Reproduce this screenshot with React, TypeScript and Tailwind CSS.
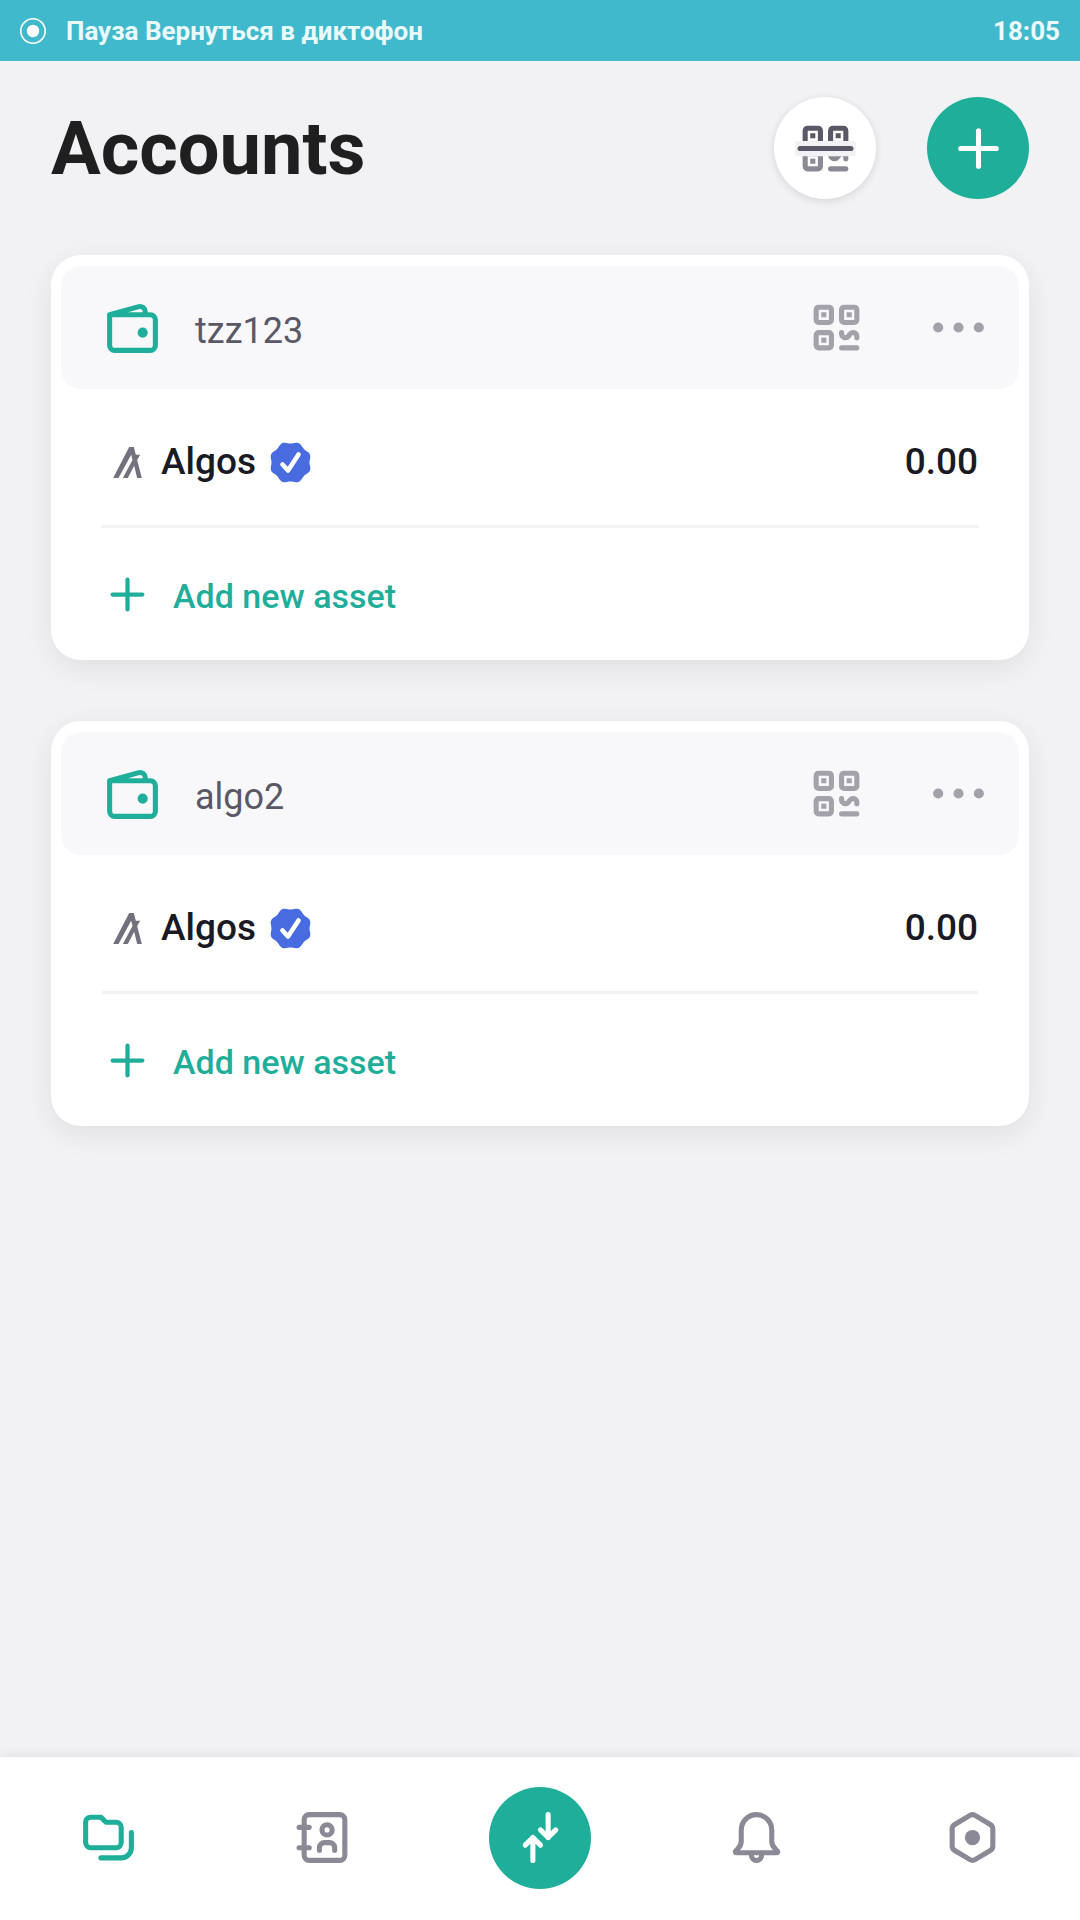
import type { ReactNode } from 'react';

const accounts = [
  { name: 'tzz123', asset: 'Algos', balance: '0.00' },
  { name: 'algo2', asset: 'Algos', balance: '0.00' },
];

function Icon({ children, className = 'size-[61px]' }: { children: ReactNode; className?: string }) {
  return (
    <svg
      viewBox="0 0 24 24"
      fill="none"
      stroke="currentColor"
      strokeWidth={2}
      strokeLinecap="round"
      strokeLinejoin="round"
      className={`shrink-0 ${className}`}
      aria-hidden="true"
    >
      {children}
    </svg>
  );
}

function QrTop() {
  return (
    <>
      <rect x="4" y="4" width="6" height="6" rx="1" />
      <rect x="14" y="4" width="6" height="6" rx="1" />
      <path d="M6 6h2v2H6zM16 6h2v2h-2z" fill="currentColor" stroke="none" />
    </>
  );
}

function QrBottom() {
  return (
    <>
      <rect x="4" y="14" width="6" height="6" rx="1" />
      <path d="M6 16h2v2H6z" fill="currentColor" stroke="none" />
      <path d="M14 14v.5a1.5 1.5 0 0 0 2.7.9l.6-.8a1.5 1.5 0 0 1 2.7.9v.5M14 20h6" />
    </>
  );
}

function QrIcon() {
  return (
    <Icon>
      <QrTop />
      <QrBottom />
    </Icon>
  );
}

function ScanIcon() {
  return (
    <Icon>
      <g className="text-[#5a5866]">
        <QrTop />
      </g>
      <g className="text-[#8b8995]">
        <QrBottom />
      </g>
      <rect x="0" y="9" width="24" height="6" rx="1" fill="#f2f2f4" stroke="none" />
      <path d="M2 12h20" stroke="#5a5866" />
    </Icon>
  );
}

function WalletIcon() {
  return (
    <Icon className="size-[61px] text-[#1fae9a]">
      <path d="M3 7h16a2 2 0 0 1 2 2v10a2 2 0 0 1-2 2H5a2 2 0 0 1-2-2zL14.5 3.8A2 2 0 0 1 17 5.7V7" />
      <circle cx="16" cy="14" r="2" fill="currentColor" stroke="none" />
    </Icon>
  );
}

function PlusIcon({ className }: { className?: string }) {
  return (
    <Icon className={className}>
      <path d="M12 5v14M5 12h14" />
    </Icon>
  );
}

function AlgoLogo() {
  return (
    <svg viewBox="0 0 86 93" className="h-[31px] w-[29px]" fill="#73717d" aria-hidden="true">
      <path d="M0 93 48 0h14l6 23h13l-9 16 14 54H72L63 56 44 93H29l29-54-4-16-38 70z" />
    </svg>
  );
}

// eight-lobed seal outline
const sealPoints = Array.from({ length: 96 }, (_, i) => {
  const angle = (i / 96) * Math.PI * 2;
  const r = 20 - Math.cos(angle * 8);
  return `${(20.5 + r * Math.cos(angle)).toFixed(2)},${(20.5 + r * Math.sin(angle)).toFixed(2)}`;
}).join(' ');

function VerifiedBadge() {
  return (
    <svg viewBox="0 0 41 41" className="size-[41px]" role="img" aria-label="Verified">
      <polygon points={sealPoints} fill="#486bdf" />
      <path
        d="M12.5 22.5 18 28.5 28.5 12.5"
        fill="none"
        stroke="#fff"
        strokeWidth={4.6}
        strokeLinecap="round"
        strokeLinejoin="round"
      />
    </svg>
  );
}

function StatusBar() {
  return (
    <div className="flex h-[61px] items-center bg-[#40b9cc] px-5 text-[26px] font-bold text-[#eafafb]">
      <svg viewBox="0 0 26 26" className="mr-5 size-[26px]" aria-hidden="true">
        <circle cx="13" cy="13" r="12.2" fill="none" stroke="#fff" strokeWidth={1.6} />
        <circle cx="13" cy="13" r="6.2" fill="#fff" />
      </svg>
      <span className="pt-0.5">Пауза Вернуться в диктофон</span>
      <time className="ml-auto pt-0.5">18:05</time>
    </div>
  );
}

function AccountCard({ name, asset, balance }: { name: string; asset: string; balance: string }) {
  return (
    <section className="rounded-[30px] bg-white px-[10px] pt-[11px] shadow-[0_8px_30px_rgba(0,0,0,0.08)]">
      <div className="flex h-[123px] items-center rounded-[20px] bg-[#f8f8fa] pr-[30px] pl-[41px]">
        <WalletIcon />
        <h2 className="ml-8 pt-1.5 text-[36px] text-[#5a5866]">{name}</h2>
        <div className="ml-auto flex gap-[61px] text-[#a3a1aa]">
          <button type="button" aria-label="Show QR code">
            <QrIcon />
          </button>
          <button type="button" aria-label="More options">
            <Icon>
              <g fill="currentColor" stroke="none">
                <circle cx="4" cy="12" r="2" />
                <circle cx="12" cy="12" r="2" />
                <circle cx="20" cy="12" r="2" />
              </g>
            </Icon>
          </button>
        </div>
      </div>
      <div className="mx-[41px] flex h-[139px] items-center border-b-3 border-[#f2f2f4] pt-[10px] text-[37px] font-medium text-[#1a1a24]">
        <span className="mr-2 flex w-[51px] justify-center">
          <AlgoLogo />
        </span>
        <span className="mr-3.5">{asset}</span>
        <VerifiedBadge />
        <span className="ml-auto">{balance}</span>
      </div>
      <button
        type="button"
        className="flex h-[132px] w-full items-center px-[41px] text-[34px] font-medium text-[#1fae9a]"
      >
        <PlusIcon className="mr-5 size-[51px]" />
        <span className="pt-1">Add new asset</span>
      </button>
    </section>
  );
}

function NavItem({ label, active, children }: { label: string; active?: boolean; children: ReactNode }) {
  return (
    <a
      href="#"
      aria-label={label}
      className={`flex flex-1 justify-center ${active ? 'text-[#1fae9a]' : 'text-[#8b8995]'}`}
    >
      {children}
    </a>
  );
}

function BottomNav() {
  return (
    <nav className="mt-auto flex h-[163px] items-center bg-white pb-0.5 shadow-[0_-2px_10px_rgba(0,0,0,0.07)]">
      <NavItem label="Accounts" active>
        <Icon>
          <path d="M3 6a2 2 0 0 1 2-2h4l2 2h4a2 2 0 0 1 2 2v6a2 2 0 0 1-2 2H5a2 2 0 0 1-2-2z" />
          <path d="M21 10v6a4 4 0 0 1-4 4H9" />
        </Icon>
      </NavItem>
      <NavItem label="Contacts">
        <Icon>
          <rect x="4" y="3" width="16" height="18" rx="2" />
          <path d="M2 8h4M2 16h4M10 17v-1a2 2 0 0 1 2-2h2a2 2 0 0 1 2 2v1" />
          <circle cx="13" cy="9" r="2" />
        </Icon>
      </NavItem>
      <div className="flex flex-1 justify-center">
        <button
          type="button"
          aria-label="Transfer"
          className="flex size-[102px] items-center justify-center rounded-full bg-[#1fae9a] text-white"
        >
          <Icon>
            <path d="M15 3v9M12 9l3 3 3-3M9 21v-9M6 15l3-3 3 3" />
          </Icon>
        </button>
      </div>
      <NavItem label="Notifications">
        <Icon>
          <path d="M6 9a6 6 0 0 1 12 0v4.5c0 1.3.6 2.300 1.500 3.100l.7.700c.3.300.1.700-.2.700H4c-.3 0-.5-.4-.2-.7l.7-.7C5.400 15.800 6 14.800 6 13.500z" />
          <path d="M10 18.500v.5a2 2 0 0 0 4 0v-.5" />
        </Icon>
      </NavItem>
      <NavItem label="Settings">
        <Icon>
          <path d="M11 3.300a2 2 0 0 1 2 0l6 3.600a2 2 0 0 1 1 1.700v6.800a2 2 0 0 1-1 1.700l-6 3.600a2 2 0 0 1-2 0l-6-3.600a2 2 0 0 1-1-1.700V8.600a2 2 0 0 1 1-1.700z" />
          <circle cx="12" cy="12" r="3" fill="currentColor" stroke="none" />
        </Icon>
      </NavItem>
    </nav>
  );
}

export default function App() {
  return (
    <div className="flex min-h-screen flex-col bg-[#f2f2f4] font-['Roboto',sans-serif]">
      <StatusBar />
      <header className="mt-9 flex items-center px-[51px]">
        <h1 className="pt-0.5 text-[74px] leading-none font-bold text-[#1f1f1f]">Accounts</h1>
        <button
          type="button"
          aria-label="Scan QR code"
          className="ml-auto flex size-[102px] items-center justify-center rounded-full bg-white shadow-[0_2px_8px_rgba(0,0,0,0.12)]"
        >
          <ScanIcon />
        </button>
        <button
          type="button"
          aria-label="Add account"
          className="ml-[51px] flex size-[102px] items-center justify-center rounded-full bg-[#1fae9a] text-white"
        >
          <PlusIcon />
        </button>
      </header>
      <main className="mt-14 flex flex-col gap-[61px] px-[51px] pb-[61px]">
        {accounts.map((account) => (
          <AccountCard key={account.name} {...account} />
        ))}
      </main>
      <BottomNav />
    </div>
  );
}
